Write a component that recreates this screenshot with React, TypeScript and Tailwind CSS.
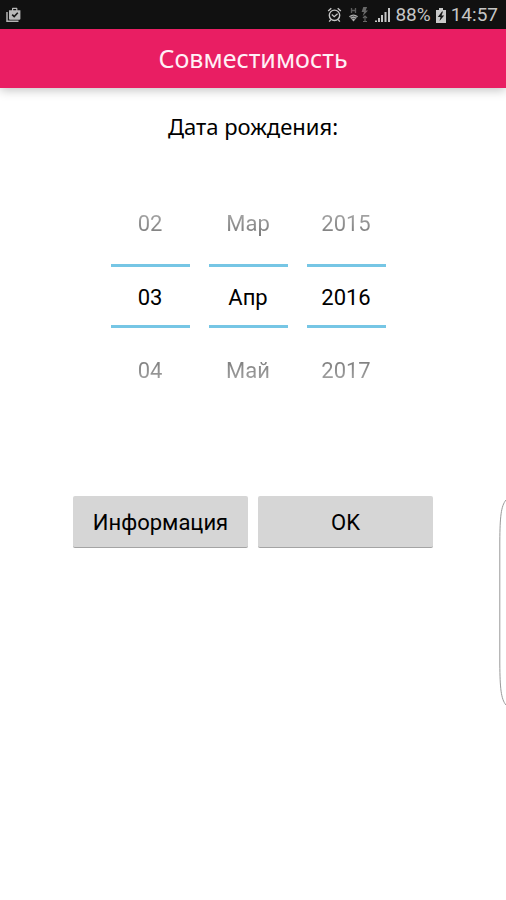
type PickerProps = {
  label: string;
  prev: string;
  value: string;
  next: string;
};

const pickers: PickerProps[] = [
  { label: "День", prev: "02", value: "03", next: "04" },
  { label: "Месяц", prev: "Мар", value: "Апр", next: "Май" },
  { label: "Год", prev: "2015", value: "2016", next: "2017" },
];

function AppsIcon() {
  return (
    <svg width="16" height="16" viewBox="0 0 16 16" aria-hidden="true">
      <path d="M1 5v9.2h11.5" fill="none" stroke="#b4b4b4" strokeWidth="1.5" />
      <path
        fill="#b9b9b9"
        fillRule="evenodd"
        d="M3 3.2h3V1.8c0-.6.4-1 1-1h3.4c.6 0 1 .4 1 1v1.4h3v8.6c0 .5-.4.9-.9.9H3.9c-.5 0-.9-.4-.9-.9zM7.2 2v1.200h3V2z"
      />
      <path d="m6.200 7.600 2 2 3.600-3.800" fill="none" stroke="#151515" strokeWidth="1.600" />
    </svg>
  );
}

function AlarmIcon() {
  return (
    <svg width="15" height="16" viewBox="0 0 15 16" fill="none" stroke="#c6c6c6" aria-hidden="true">
      <circle cx="7.500" cy="8.300" r="5.200" strokeWidth="1.400" />
      <path d="M1.200 4 4.300 1.300M13.800 4l-3.100-2.700M3.800 12.600l-1.600 2M11.200 12.600l1.600 2" strokeWidth="1.400" />
      <path d="m4.800 7.500 2.400 2.200 3.400-3" strokeWidth="1.200" />
    </svg>
  );
}

function NetworkIcon() {
  return (
    <svg width="21" height="16" viewBox="0 0 21 16" aria-hidden="true">
      <path d="M3.500 1v5M7.500 1v5M3.500 3.500h4" fill="none" stroke="#5c5c5c" strokeWidth="1.300" />
      <path d="M1 9.300q4.500-3.600 9 0l-4.500 5.200z" fill="#b0b0b0" />
      <path d="M2 10.300q3.500-2.400 7 0M3.500 12q2-1.200 4 0" fill="none" stroke="#222" strokeWidth=".7" />
      <path d="M15.300 0h3.800l-1.400 3.600h2.300l-5.400 5.600 1.400-4.200h-2.400z" fill="#686868" />
      <path d="M17 9v5.500M15 11l2-2 2 2M15 14.500h4" fill="none" stroke="#666" strokeWidth="1.100" />
    </svg>
  );
}

function SignalIcon() {
  return (
    <svg width="16" height="16" viewBox="0 0 16 16" fill="#c6c6c6" aria-hidden="true">
      <path d="M0 13.500h2V15H0zM3 11h2v4H3zM6 8h2v7H6zM9.500 5h2v10h-2zM13 1h2v14h-2z" />
    </svg>
  );
}

function BatteryIcon() {
  return (
    <svg width="12" height="15" viewBox="0 0 12 15" aria-hidden="true">
      <path d="M4 0h4v2h3v13H1V2h3z" fill="#c9c9c9" />
      <path d="M7 3.500 2.800 9h2.700l-1 4L9.200 7.400H6.500L8 3.500z" fill="#151515" />
    </svg>
  );
}

function StatusBar() {
  return (
    <div className="flex h-[29px] items-center justify-between bg-[#111] pt-px pl-[6px] pr-2 text-[#c6c6c6]">
      <AppsIcon />
      <div className="flex items-center">
        <AlarmIcon />
        <span className="ml-[6px] flex">
          <NetworkIcon />
        </span>
        <span className="ml-[6px] flex">
          <SignalIcon />
        </span>
        <span className="ml-1 text-[19px] leading-6">88%</span>
        <span className="mx-1 flex">
          <BatteryIcon />
        </span>
        <time className="text-[19px] leading-6">14:57</time>
      </div>
    </div>
  );
}

function Picker({ label, prev, value, next }: PickerProps) {
  return (
    <div className="flex w-[79px] flex-col gap-1">
      <button
        type="button"
        className="h-[72px] bg-linear-to-b from-[#a6a6a6] from-35% to-[#7c7c7c] to-65% bg-clip-text text-transparent"
      >
        {prev}
      </button>
      <input
        aria-label={label}
        defaultValue={value}
        className="h-16 w-full border-y-[3px] border-[#76c6e5] pt-0.5 text-center text-black outline-none"
      />
      <button
        type="button"
        className="h-[78px] bg-linear-to-b from-[#7c7c7c] from-35% to-[#a6a6a6] to-65% bg-clip-text text-transparent"
      >
        {next}
      </button>
    </div>
  );
}

export default function App() {
  return (
    <div className="relative min-h-screen overflow-hidden bg-white font-['Roboto',sans-serif] text-black">
      <StatusBar />
      <header className="flex h-[59px] items-center justify-center bg-[#e91e63] pb-0.5 shadow-[0_2px_10px_rgba(0,0,0,0.25)]">
        <h1 className="font-['Noto_Sans',sans-serif] text-[25px] leading-8 text-[#fff0f6]">Совместимость</h1>
      </header>

      <main className="flex flex-col items-center pt-[22px]">
        <h2 className="font-['Noto_Sans',sans-serif] text-[22px] leading-8">Дата рождения:</h2>

        <div className="mt-[46px] flex justify-center gap-[19px] pr-[10px] text-[22px] leading-8">
          {pickers.map((picker) => (
            <Picker key={picker.label} {...picker} />
          ))}
        </div>

        <div className="mt-[86px] grid grid-cols-2 gap-[10px] text-[22px] leading-8">
          <button type="button" className="h-[52px] w-[175px] rounded-xs border-b border-[#a4a4a4] bg-[#d6d6d6] pt-[3px]">
            Информация
          </button>
          <button type="button" className="h-[52px] w-[175px] rounded-xs border-b border-[#a4a4a4] bg-[#d6d6d6] pt-[3px]">
            OK
          </button>
        </div>
      </main>

      {/* edge panel handle */}
      <svg
        className="absolute right-0 top-[499px]"
        width="7"
        height="207"
        viewBox="0 0 7 207"
        fill="none"
        stroke="#999"
        aria-hidden="true"
      >
        <path d="M7 1C2 7 1 18 .8 42v123c.2 24 1.200 35 6.200 41" />
      </svg>
    </div>
  );
}
